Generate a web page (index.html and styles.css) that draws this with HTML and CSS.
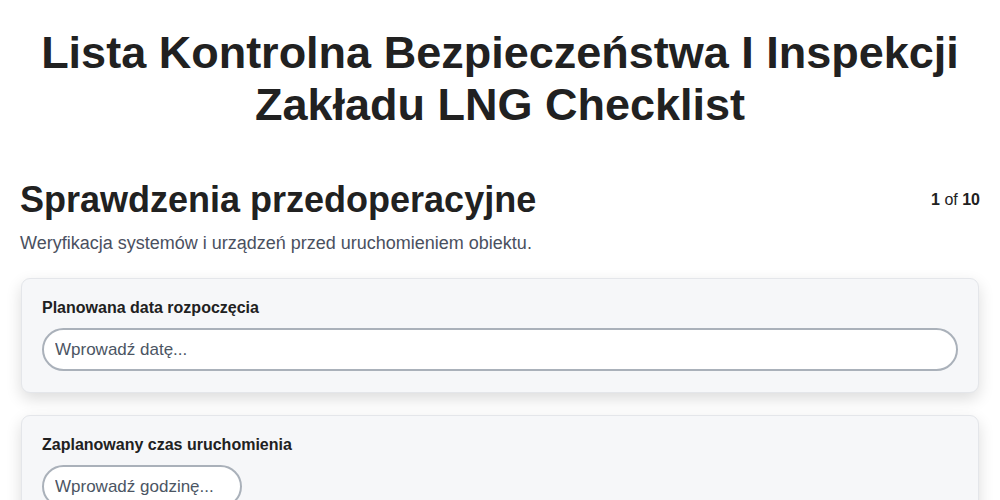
FILE: index.html
```html
<!DOCTYPE html>
<html lang="pl">
<head>
    <meta charset="UTF-8">
    <meta name="viewport" content="width=device-width, initial-scale=1.0">
    <title>Lista Kontrolna LNG</title>
    <link rel="stylesheet" href="styles.css">
</head>
<body>
    <header>
        <h1>Lista Kontrolna Bezpieczeństwa I Inspekcji Zakładu LNG Checklist</h1>
    </header>
    <main>
        <div class="section-head">
            <h2>Sprawdzenia przedoperacyjne</h2>
            <div class="progress"><b>1</b> of <b>10</b></div>
        </div>
        <p class="section-desc">Weryfikacja systemów i urządzeń przed uruchomieniem obiektu.</p>

        <div class="card">
            <label for="startDate">Planowana data rozpoczęcia</label>
            <input type="text" id="startDate" placeholder="Wprowadź datę...">
        </div>

        <div class="card">
            <label for="startTime">Zaplanowany czas uruchomienia</label>
            <input type="text" id="startTime" class="short" placeholder="Wprowadź godzinę...">
        </div>
    </main>
</body>
</html>
```

FILE: styles.css
```css
body {
    font-family: 'Liberation Sans', Arial, sans-serif;
    margin: 0;
    padding: 0;
    background-color: #ffffff;
    color: #212121;
}

header {
    text-align: center;
    padding: 27px 20px 0;
}

header h1 {
    margin: 0;
    font-size: 45px;
    line-height: 52px;
    font-weight: bold;
    color: #212121;
}

main {
    padding: 0 20px;
}

.section-head {
    display: flex;
    justify-content: space-between;
    align-items: center;
    margin-top: 47px;
}

.section-head h2 {
    margin: 0;
    font-size: 36px;
    line-height: 44px;
    color: #212121;
}

.progress {
    font-size: 16px;
    color: #212121;
}

.section-desc {
    margin: 11px 0 24px;
    font-size: 18px;
    color: #4a5060;
}

.card {
    background-color: #f6f7f9;
    border: 1px solid #e4e6ea;
    border-radius: 9px;
    box-shadow: 0 6px 16px rgba(0, 0, 0, 0.14);
    padding: 20px 20px 21px;
    margin: 0 1px 22px;
}

.card label {
    display: block;
    font-size: 16px;
    font-weight: bold;
    margin-bottom: 11px;
    color: #212121;
}

.card input {
    display: block;
    box-sizing: border-box;
    width: 100%;
    height: 43px;
    padding: 0 11px;
    border: 2px solid #aab1ba;
    border-radius: 22px;
    background: #ffffff;
    font-family: inherit;
    font-size: 17px;
    color: #212121;
}

.card input::placeholder {
    color: #4b5563;
}

.card input.short {
    width: 200px;
}
```
